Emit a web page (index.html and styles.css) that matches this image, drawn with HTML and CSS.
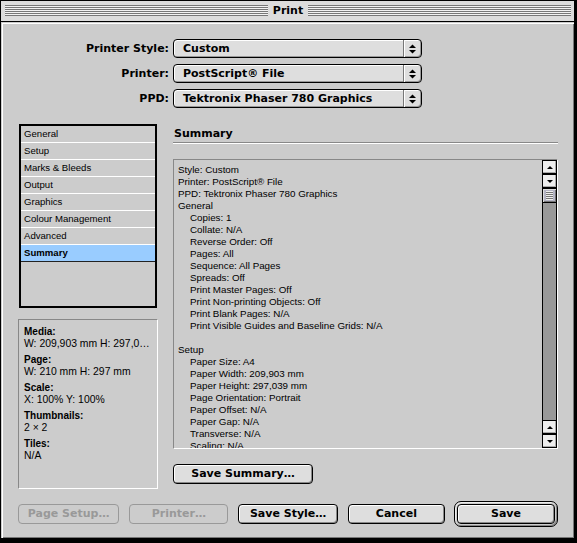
FILE: index.html
```html
<!DOCTYPE html>
<html>
<head>
<meta charset="utf-8">
<title>Print</title>
<link rel="stylesheet" href="styles.css">
</head>
<body>
<div class="window">
  <div class="titlebar">
    <span class="stripes"></span>
    <span class="title">Print</span>
    <span class="stripes"></span>
  </div>
  <div class="content">
    <div class="popups">
      <div class="plabel">Printer Style:</div>
      <div class="popup"><span class="val">Custom</span><span class="arr"><svg width="7" height="10" viewBox="0 0 7 10"><polygon points="0,4 3.5,0.5 7,4" fill="#000"/><polygon points="0,6 7,6 3.5,9.5" fill="#000"/></svg></span></div>
      <div class="plabel">Printer:</div>
      <div class="popup"><span class="val">PostScript® File</span><span class="arr"><svg width="7" height="10" viewBox="0 0 7 10"><polygon points="0,4 3.5,0.5 7,4" fill="#000"/><polygon points="0,6 7,6 3.5,9.5" fill="#000"/></svg></span></div>
      <div class="plabel">PPD:</div>
      <div class="popup"><span class="val">Tektronix Phaser 780 Graphics</span><span class="arr"><svg width="7" height="10" viewBox="0 0 7 10"><polygon points="0,4 3.5,0.5 7,4" fill="#000"/><polygon points="0,6 7,6 3.5,9.5" fill="#000"/></svg></span></div>
    </div>

    <div class="main">
      <div class="leftcol">
        <div class="list">
          <div class="item">General</div>
          <div class="item">Setup</div>
          <div class="item">Marks &amp; Bleeds</div>
          <div class="item">Output</div>
          <div class="item">Graphics</div>
          <div class="item">Colour Management</div>
          <div class="item">Advanced</div>
          <div class="item sel">Summary</div>
        </div>
        <dl class="info">
          <dt>Media:</dt><dd>W: 209,903 mm H: 297,0…</dd>
          <dt>Page:</dt><dd>W: 210 mm H: 297 mm</dd>
          <dt>Scale:</dt><dd>X: 100% Y: 100%</dd>
          <dt>Thumbnails:</dt><dd>2 × 2</dd>
          <dt>Tiles:</dt><dd>N/A</dd>
        </dl>
      </div>
      <div class="rightcol">
        <div class="heading">Summary</div>
        <div class="sumbox">
          <div class="sumtext">
            <div>Style: Custom</div>
            <div>Printer: PostScript® File</div>
            <div>PPD: Tektronix Phaser 780 Graphics</div>
            <div>General</div>
            <div class="ind">Copies: 1</div>
            <div class="ind">Collate: N/A</div>
            <div class="ind">Reverse Order: Off</div>
            <div class="ind">Pages: All</div>
            <div class="ind">Sequence: All Pages</div>
            <div class="ind">Spreads: Off</div>
            <div class="ind">Print Master Pages: Off</div>
            <div class="ind">Print Non-printing Objects: Off</div>
            <div class="ind">Print Blank Pages: N/A</div>
            <div class="ind">Print Visible Guides and Baseline Grids: N/A</div>
            <div class="blank"></div>
            <div>Setup</div>
            <div class="ind">Paper Size: A4</div>
            <div class="ind">Paper Width: 209,903 mm</div>
            <div class="ind">Paper Height: 297,039 mm</div>
            <div class="ind">Page Orientation: Portrait</div>
            <div class="ind">Paper Offset: N/A</div>
            <div class="ind">Paper Gap: N/A</div>
            <div class="ind">Transverse: N/A</div>
            <div class="ind">Scaling: N/A</div>
          </div>
          <div class="scroll">
            <div class="sbtn"><span class="tri-up"></span></div>
            <div class="sbtn"><span class="tri-down"></span></div>
            <div class="thumb"><span class="grip"></span></div>
            <div class="track"></div>
            <div class="sbtn"><span class="tri-up"></span></div>
            <div class="sbtn"><span class="tri-down"></span></div>
          </div>
        </div>
        <div class="btn savesum">Save Summary…</div>
      </div>
    </div>

    <div class="buttons">
      <div class="btn dis w-pagesetup">Page Setup…</div>
      <div class="btn dis w-printer">Printer…</div>
      <div class="btn w-savestyle">Save Style…</div>
      <div class="btn w-cancel">Cancel</div>
      <div class="ring"><div class="btn w-save">Save</div></div>
    </div>
  </div>
</div>
</body>
</html>
```

FILE: styles.css
```css
* { box-sizing: border-box; }

html, body {
  margin: 0;
  padding: 0;
}

body {
  background: #000;
  width: 577px;
  height: 543px;
  overflow: hidden;
  font-family: "Liberation Sans", Arial, sans-serif;
  color: #000;
}

.window {
  margin: 1px 0 0 1px;
  width: 573px;
  height: 537px;
  background: #ccc;
  display: flex;
  flex-direction: column;
}

.titlebar {
  height: 21px;
  flex: none;
  background: #dcdcdc;
  border-bottom: 1px solid #000;
  display: flex;
  align-items: flex-start;
  padding: 4px 3px 0 4px;
}

.stripes {
  flex: 1;
  height: 11px;
  background: repeating-linear-gradient(to bottom, #777 0 1px, #f2f2f2 1px 2px);
}

.title {
  font: bold 11px/11px "DejaVu Sans", sans-serif;
  padding: 0 5px;
}

.content {
  flex: 1;
  padding: 17px 16px 0 17px;
  box-shadow: inset 1px 1px 0 #ccc, inset 2px 2px 0 #fff, inset -1px -1px 0 #777;
}

/* popups */
.popups {
  display: grid;
  grid-template-columns: 151px 249px;
  grid-auto-rows: 19px;
  column-gap: 4px;
  row-gap: 6px;
}

.plabel {
  font: bold 11px/19px "DejaVu Sans", sans-serif;
  text-align: right;
  white-space: nowrap;
}

.popup {
  display: flex;
  border: 1px solid #000;
  border-radius: 4px;
  background: #dedede;
  box-shadow: inset 1px 1px 0 #fff, inset -1px -1px 0 #999;
  font: bold 11px/17px "DejaVu Sans", sans-serif;
}

.popup .val {
  flex: 1;
  padding-left: 9px;
  white-space: nowrap;
}

.popup .arr {
  width: 18px;
  border-left: 1px solid #777;
  box-shadow: inset 1px 0 0 #fff;
  display: flex;
  align-items: center;
  justify-content: center;
}

/* main area */
.main {
  display: grid;
  grid-template-columns: 140px 385px;
  column-gap: 15px;
  margin-top: 16px;
  align-items: start;
}

.list {
  margin-left: 1px;
  width: 138px;
  height: 184px;
  border: 2px solid #000;
  background: #ccc;
}

.item {
  height: 17px;
  border-bottom: 1px solid #fff;
  font-size: 9.6px;
  line-height: 16px;
  padding-left: 3px;
  white-space: nowrap;
}

.item.sel {
  background: #99ccff;
  border-bottom-color: #222;
  font-weight: bold;
}

.info {
  margin: 11px 0 0 0;
  height: 170px;
  border: 1px solid;
  border-color: #888 #fff #fff #888;
  padding: 6px 0 0 5px;
  font-size: 10.4px;
}

.info dt {
  font-weight: bold;
  font-size: 10px;
  line-height: 12px;
}

.info dd {
  margin: 0 0 4px 0;
  line-height: 12px;
  white-space: nowrap;
}

.heading {
  margin-top: 3px;
  padding: 0 0 2px 1px;
  font: bold 11px/13px "DejaVu Sans", sans-serif;
  border-bottom: 1px solid #888;
  box-shadow: 0 1px 0 #fff;
}

.sumbox {
  margin-top: 16px;
  height: 290px;
  border: 1px solid;
  border-color: #888 #fff #fff #888;
  display: flex;
}

.sumtext {
  flex: 1;
  padding: 4px 0 0 4px;
  overflow: hidden;
  font-size: 9.8px;
  line-height: 12px;
  white-space: nowrap;
}

.sumtext .ind { padding-left: 12px; }
.sumtext .blank { height: 12px; }

.scroll {
  width: 15px;
  display: flex;
  flex-direction: column;
}

.sbtn {
  height: 14px;
  flex: none;
  border: 1px solid #000;
  background: #eee;
  box-shadow: inset -1px -1px 0 #aaa;
  display: flex;
  align-items: center;
  justify-content: center;
}

.tri-up {
  width: 0;
  height: 0;
  border-left: 3px solid transparent;
  border-right: 3px solid transparent;
  border-bottom: 3px solid #000;
}

.tri-down {
  width: 0;
  height: 0;
  border-left: 3px solid transparent;
  border-right: 3px solid transparent;
  border-top: 3px solid #000;
}

.thumb {
  height: 15px;
  flex: none;
  border: 1px solid #000;
  background: #b4b4c4;
  box-shadow: inset 1px 1px 0 #ddd, inset -1px -1px 0 #777;
  display: flex;
  align-items: center;
  justify-content: center;
}

.grip {
  width: 7px;
  height: 9px;
  background: repeating-linear-gradient(to bottom, #eee 0 1px, #777 1px 2px);
}

.track {
  flex: 1;
  background: #999;
  border-left: 1px solid #000;
  border-right: 1px solid #000;
}

/* buttons */
.btn {
  height: 20px;
  border: 1px solid #000;
  border-radius: 4px;
  background: #dedede;
  box-shadow: inset 1px 1px 0 #fff, inset -1px -1px 0 #888;
  font: bold 11px/18px "DejaVu Sans", sans-serif;
  text-align: center;
  white-space: nowrap;
}

.btn.dis {
  border-color: #999;
  color: #999;
  background: #ccc;
  box-shadow: none;
}

.savesum {
  margin-top: 15px;
  width: 140px;
}

.buttons {
  display: flex;
  align-items: center;
  gap: 10px;
  margin-top: 12px;
  height: 26px;
}

.w-pagesetup { width: 102px; }
.w-printer { width: 100px; }
.w-savestyle { width: 100px; }
.w-cancel { width: 98px; }
.w-save { width: 98px; }

.ring {
  margin-left: -1px;
  border: 1px solid #000;
  border-radius: 7px;
  padding: 2px;
  background: #ccc;
  box-shadow: inset 1px 1px 0 #eee, inset -1px -1px 0 #888;
}
```
